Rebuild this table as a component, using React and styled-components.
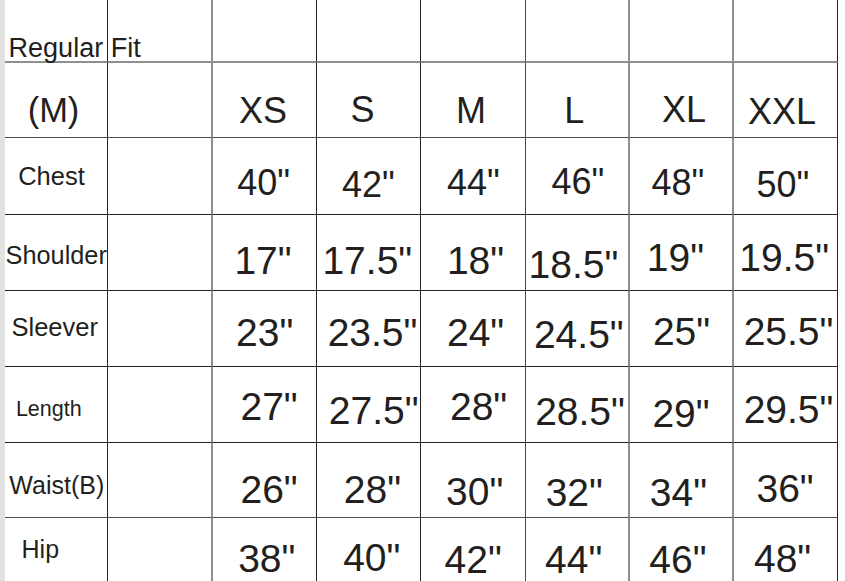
import React from 'react';
import styled, { createGlobalStyle } from 'styled-components';

const GlobalStyle = createGlobalStyle`
  html, body {
    margin: 0;
    padding: 0;
    background: #fff;
    overflow: hidden;
  }
  body {
    font-family: "Liberation Sans", Arial, Helvetica, sans-serif;
    color: #231f20;
  }
`;

const LINES = {
  dark: '1px solid #232323',
  mid: '1px solid #4d4d4d',
  gray: '2px solid #8f8f8f',
};

const COL_WIDTHS = [103, 105, 104, 104, 105, 104, 104, 104];
const ROW_HEIGHTS = [63, 75, 77, 76, 76, 76, 75, 76];
const COL_LINES = ['dark', 'gray', 'dark', 'dark', 'mid', 'gray', 'gray', 'dark'];
const ROW_LINES = ['gray', 'mid', 'dark', 'dark', 'dark', 'dark', 'mid', 'dark'];

const Page = styled.div`
  display: flex;
  height: 581px;
  overflow: hidden;
`;

const Strip = styled.div`
  flex: none;
  width: 5px;
  background: #e2e2e2;
`;

const Sheet = styled.div`
  display: grid;
  grid-template-columns: ${COL_WIDTHS.map(w => `${w}px`).join(' ')};
  grid-template-rows: ${ROW_HEIGHTS.map(h => `${h}px`).join(' ')};
  align-content: start;
`;

const Cell = styled.div`
  box-sizing: border-box;
  display: flex;
  align-items: center;
  justify-content: center;
  min-width: 0;
  overflow: visible;
  white-space: nowrap;
  border-right: ${p => LINES[p.$col]};
  border-bottom: ${p => LINES[p.$row]};
`;

// line-height under 1 keeps the glyph centre where it is but trims the box
const Text = styled.span`
  display: inline-block;
  font-size: ${p => p.$size}px;
  line-height: 0.8;
  transform: translate(${p => p.$dx}px, ${p => p.$dy}px);
`;

// [text, size, dx, dy]
const labels = [
  ['Regular Fit', 27, 18.6, 17.5],
  ['(M)', 34.5, -2.5, 10.5],
  ['Chest', 25.5, -4.5, 0],
  ['Shoulder', 25.3, 0.2, 3],
  ['Sleever', 25.5, -1.3, -1.2],
  ['Length', 21.5, -7.2, 4.7],
  ['Waist(B)', 25, 0.8, 5],
  ['Hip', 25, -15.7, -7.2],
];

const sizes = [
  ['XS', -1.5, 10.5],
  ['S', -5.9, 10.3],
  ['M', -2, 10.5],
  ['L', -2.8, 10.5],
  ['XL', 3, 9.7],
  ['XXL', -3.5, 11.7],
];

// [value, dx, dy] per row
const measures = [
  { size: 36, cells: [['40"', -0.8, 6.7], ['42"', 0, 8.7], ['44"', 0.5, 6.7], ['46"', 1, 6], ['48"', -3, 6.7], ['50"', -2.5, 9]] },
  { size: 39, cells: [['17"', -1.5, 8.2], ['17.5"', -1.2, 8.2], ['18"', 2.5, 8.2], ['18.5"', -3.6, 11.8], ['19"', -5.6, 4.8], ['19.5"', -1.3, 4.8]] },
  { size: 39, cells: [['23"', 0.2, 4.3], ['23.5"', 4, 4.3], ['24"', 2.6, 4.3], ['24.5"', 1.8, 6], ['25"', 0.5, 3.3], ['25.5"', 3, 3.3]] },
  { size: 39, cells: [['27"', 4.6, 1.8], ['27.5"', 5.2, 5.5], ['28"', 5.6, 1.8], ['28.5"', 3, 6.5], ['29"', 0, 8.5], ['29.5"', 3, 5.2]] },
  { size: 39, cells: [['26"', 4.6, 9.5], ['28"', 3.9, 9.5], ['30"', 1.7, 11.7], ['32"', -2.7, 13.3], ['34"', -2.6, 12.5], ['36"', -0.4, 9.2]] },
  { size: 39, cells: [['38"', 2.3, 3.3], ['40"', 3.3, 2.2], ['42"', 0.2, 4], ['44"', -3.3, 3.8], ['46"', -3.1, 4], ['48"', -2.9, 3.3]] },
];

const buildRows = () => {
  const rows = [];
  rows.push([labels[0], null, null, null, null, null, null, null]);
  rows.push([labels[1], null, ...sizes.map(([t, dx, dy]) => [t, 36, dx, dy])]);
  measures.forEach((m, i) => {
    rows.push([labels[i + 2], null, ...m.cells.map(([t, dx, dy]) => [t, m.size, dx, dy])]);
  });
  return rows;
};

const SizeChart = () => {
  const rows = buildRows();

  return (
    <Sheet>
      {rows.map((row, r) =>
        row.map((cell, c) => (
          <Cell key={`${r}-${c}`} $col={COL_LINES[c]} $row={ROW_LINES[r]}>
            {cell && (
              <Text $size={cell[1]} $dx={cell[2]} $dy={cell[3]}>
                {cell[0]}
              </Text>
            )}
          </Cell>
        ))
      )}
    </Sheet>
  );
};

export default function App() {
  return (
    <>
      <GlobalStyle />
      <Page>
        <Strip />
        <SizeChart />
      </Page>
    </>
  );
}
